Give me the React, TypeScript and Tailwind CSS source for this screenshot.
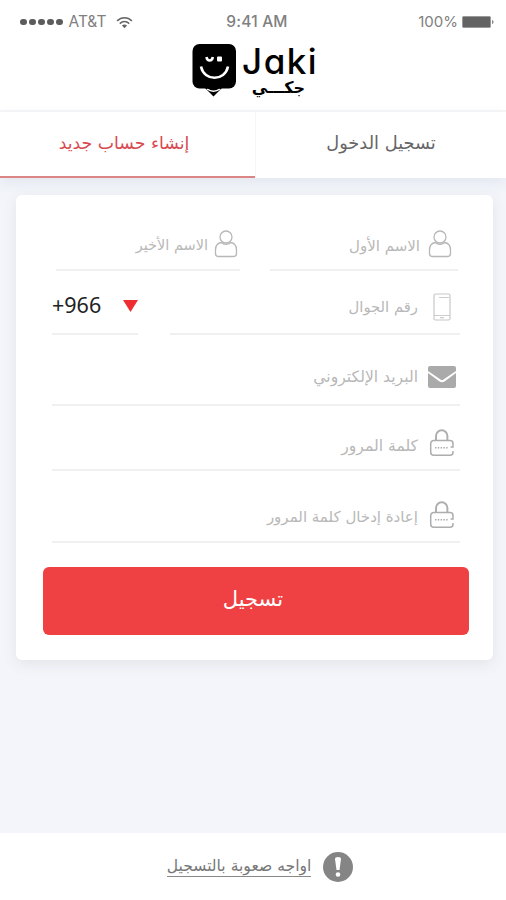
import type { ReactNode } from 'react'

const UserIcon = () => (
  <svg width="24" height="28" viewBox="0 0 24 28" fill="none" stroke="#b8b8b8" strokeWidth="1.300">
    <circle cx="12" cy="7" r="6" />
    <path d="M7.500 12.500C3 13 1.500 16.500 1.500 20v3.500c0 2 1 3 3 3h15c2 0 3-1 3-3V20c0-3.500-1.500-7-6-7.500-2.200 2.300-6.800 2.300-9 0z" />
  </svg>
)

const PhoneIcon = () => (
  <svg width="18" height="28" viewBox="0 0 18 28" fill="none" stroke="#c8c8c8" strokeWidth="1.200">
    <rect x="1" y="1" width="16" height="26" rx="1.500" />
    <path d="M1 22.500h16M6 4.500h10" strokeWidth=".9" />
    <path d="M7 24.700h4" />
  </svg>
)

const MailIcon = () => (
  <svg width="28" height="22" viewBox="0 0 28 22" fill="#aaa">
    <path d="M2 0h24a2 2 0 0 1 2 2v3L15.500 13.500q-1.500 1-3 0L0 5V2a2 2 0 0 1 2-2z" />
    <path d="M0 7l11.500 8.500q2.500 1.500 5 0L28 7v13a2 2 0 0 1-2 2H2a2 2 0 0 1-2-2z" />
  </svg>
)

const LockIcon = () => (
  <svg width="26" height="28" viewBox="0 0 26 28" fill="none" stroke="#adadad" strokeWidth="1.500">
    <path d="M7 11.500V7a5.700 5.700 0 0 1 11.400 0v4.500" strokeWidth="1.900" />
    <path d="M21.500 18h2.500v-3.500a3 3 0 0 0-3-3H4.700a3 3 0 0 0-3 3v8.800a3 3 0 0 0 3 3H21a3 3 0 0 0 3-3V22" />
    <path d="M6 18.800h13" strokeWidth="1.500" strokeDasharray="1.500 1.300" />
  </svg>
)

const LogoMark = () => (
  <svg width="46" height="54" viewBox="0 0 46 54">
    <path d="M14 44h17l-8.500 8.500z" />
    <path d="M16 45q6.500 4.500 13 0" stroke="#fff" strokeWidth="1.500" fill="none" />
    <rect x="1.500" y="0" width="43.500" height="44.500" rx="7" />
    <path d="M10 22.500c3 15 24 15 27 0" stroke="#fff" strokeWidth="2.600" fill="none" />
    <path d="M15.500 13c.5 4.500 5.800 4.500 6.300 0" stroke="#fff" strokeWidth="2.500" fill="none" />
    <rect x="26" y="12.500" width="5" height="5" rx="1" fill="#fff" />
  </svg>
)

interface FieldProps {
  label: string
  icon: ReactNode
  className: string
  labelClass: string
}

function Field({ label, icon, className, labelClass }: FieldProps) {
  return (
    <div className={`flex items-center border-b-2 border-[#f0f0f0] ${className}`}>
      <span className="flex w-7 shrink-0 justify-center">{icon}</span>
      <span className={`whitespace-nowrap text-[#b8b8b8] ${labelClass}`}>{label}</span>
    </div>
  )
}

export default function App() {
  return (
    <div
      dir="rtl"
      className="flex h-[900px] w-[506px] flex-col overflow-hidden bg-[#f3f5fa] font-['DejaVu_Sans',sans-serif]"
    >
      <header className="flex h-[112px] shrink-0 flex-col border-b-2 border-[#f6f6f6] bg-white" dir="ltr">
        <div className="grid h-11 grid-cols-3 items-center pr-3 pl-5 font-['Inter',sans-serif] text-[15px] text-[#808080]">
          <div className="flex items-center">
            <div className="flex gap-[2.5px]">
              {[0, 1, 2, 3, 4].map((i) => (
                <span key={i} className="size-[6.5px] rounded-full bg-[#5c5c5c]" />
              ))}
            </div>
            <span className="ml-1.5 text-[15.5px]">AT&amp;T</span>
            <svg className="ml-2.5" width="17" height="13" viewBox="0 0 18 13" fill="none" stroke="#666" strokeWidth="1.600">
              <path d="M1.200 4.800c4.400-4.500 11.200-4.500 15.600 0M4 7.700c2.900-2.900 7.100-2.900 10 0" />
              <path d="M6.300 9.700 9 12.500l2.700-2.800c-1.500-1.400-3.900-1.400-5.400 0z" fill="#666" stroke="none" />
            </svg>
          </div>
          <span className="text-center text-[15.5px] font-medium tracking-[0.2px]">9:41 AM</span>
          <div className="flex items-center justify-end gap-1">
            <span>100%</span>
            <svg width="32" height="12" viewBox="0 0 32 12">
              <rect x=".5" y=".5" width="28" height="11" rx="1" fill="#636363" stroke="#999" />
              <path d="M30 4c2 .5 2 3.500 0 4z" fill="#888" />
            </svg>
          </div>
        </div>
        <div className="flex pl-[191px]">
          <LogoMark />
          <div className="ml-[5px] flex flex-col text-black">
            <span className="font-['Inter',sans-serif] text-[35px] leading-[34px] font-medium tracking-[1.5px] [font-feature-settings:'cv11','ss03']">
              Jaki
            </span>
            <span dir="rtl" className="mr-[13px] text-[16px] leading-[19px] font-bold">
              جكـــي
            </span>
          </div>
        </div>
      </header>

      <nav className="flex h-[66px] shrink-0 bg-white shadow-[0_5px_12px_#e3e7ef]">
        <div className="flex w-[251px] justify-center border-l border-[#f6f6f6] pt-[17px] text-[17.8px] leading-7 text-[#666]">
          تسجيل الدخول
        </div>
        <div className="flex flex-1 justify-center border-b-2 border-[#dc8585] pt-[17px] pr-[7px] text-[17.3px] leading-7 text-[#d84a50]">
          إنشاء حساب جديد
        </div>
      </nav>

      <main className="mt-[17px] mr-[13px] ml-4 flex h-[465px] shrink-0 flex-col rounded-md bg-white pt-6 shadow-[0_4px_14px_#e2e4e8]">
        <div className="flex h-[52px] justify-between pr-[35px] pl-10">
          <Field label="الاسم الأول" icon={<UserIcon />} className="w-[188px] pr-1" labelClass="mr-1.5 pt-1 text-[15px]" />
          <Field label="الاسم الأخير" icon={<UserIcon />} className="w-[184px]" labelClass="mr-1 pt-1 text-[14.5px]" />
        </div>
        <div className="flex h-16 justify-between pr-[33px] pl-9">
          <Field label="رقم الجوال" icon={<PhoneIcon />} className="w-[290px] pt-2.5 pr-1" labelClass="mr-2.5 text-[14.8px]" />
          <div className="flex w-[86px] items-center justify-between border-b-2 border-[#f0f0f0] pt-1.5" dir="ltr">
            <span className="font-['Noto_Sans',sans-serif] text-[21.5px] leading-8 text-[#222]">+966</span>
            <svg className="mt-0.5" width="15" height="12" viewBox="0 0 15 12" fill="#ed2d32">
              <path d="M0 0h15L7.500 12z" />
            </svg>
          </div>
        </div>
        <div className="flex flex-col pr-[33px] pl-9">
          <Field label="البريد الإلكتروني" icon={<MailIcon />} className="h-[71px] pt-3.5 pr-1" labelClass="mr-2.5 pt-0.5 text-[15.6px]" />
          <Field label="كلمة المرور" icon={<LockIcon />} className="h-[65px] pt-2.5 pr-1" labelClass="mr-2.5 pt-2 text-[15.6px]" />
          <Field label="إعادة إدخال كلمة المرور" icon={<LockIcon />} className="h-[72px] pt-[18px] pr-1" labelClass="mr-2.5 pt-1 text-[15px]" />
        </div>
        <button className="mt-6 mr-6 ml-[27px] h-[68px] rounded-md bg-[#ef4143] pr-1.5 pb-0.5 text-[21px] text-white">
          تسجيل
        </button>
      </main>

      <footer className="mt-auto flex h-[67px] items-center justify-center gap-3 bg-white pl-[14px]">
        <svg width="30" height="30" viewBox="0 0 30 30">
          <circle cx="15" cy="15" r="15" fill="#858585" />
          <path d="M12 7q0-2 3-2t3 2l-1.500 11h-3z" fill="#fff" />
          <circle cx="15" cy="22.500" r="2.300" fill="#fff" />
        </svg>
        <span className="border-b border-[#888] text-[15.6px] leading-[19px] text-[#777]">
          اواجه صعوبة بالتسجيل
        </span>
      </footer>
    </div>
  )
}
